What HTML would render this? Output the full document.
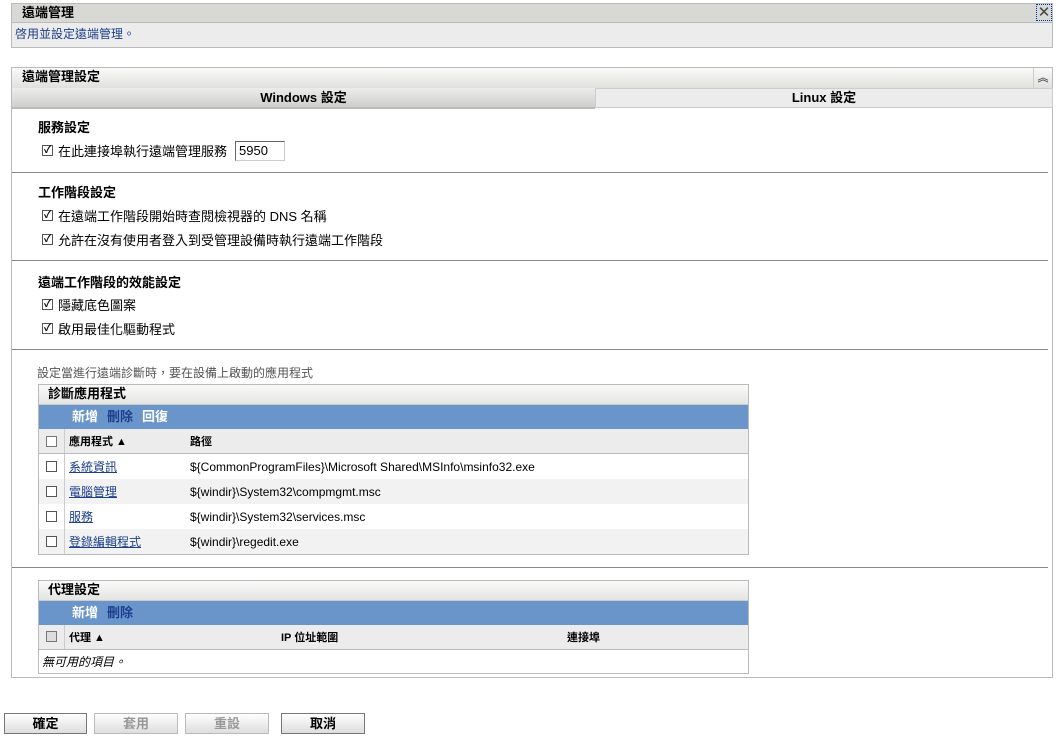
<!DOCTYPE html><html><head><meta charset="utf-8"><style>
*{margin:0;padding:0;box-sizing:border-box}
body{width:1061px;height:737px;background:#fff;font-family:"Liberation Sans","Noto Sans CJK TC",sans-serif;font-size:12px;line-height:14px;color:#000;position:relative;overflow:hidden}
.a{position:absolute}
.b{font-weight:bold}
.cb{position:absolute;width:11px;height:11px;border:1px solid #555;background:#fff;font-size:10px;line-height:9px;text-align:center;font-weight:bold}
.line{position:absolute;left:12px;width:1036px;height:1px;background:#888}
.tbl{position:absolute;left:38px;width:711px;border:1px solid #bbb}
.th{height:20px;background:linear-gradient(#fafafa,#e4e4e2);border-bottom:1px solid #ccc;font-weight:bold;font-size:13px;line-height:18px;padding:0 0 0 9px}
.bar{height:24px;background:#6a95cb;font-weight:bold;font-size:13px;line-height:24px;padding:0 0 0 33px;color:#fff}
.bar span{margin-right:9px}
.ch{height:25px;background:#ececec;border-bottom:1px solid #bbb;position:relative;font-weight:bold;font-size:11px}
.row{height:25px;position:relative}
.row a{color:#1b3f8b;text-decoration:underline}
.btn{position:absolute;top:713px;height:21px;border:1px solid #777;background:linear-gradient(#fff,#ddd);text-align:center;font-weight:bold;font-size:13px;line-height:19px}
</style></head><body>
<div class="a" style="left:11px;top:3px;width:1042px;height:45px;border:1px solid #bbb;background:#ececec">
<div style="height:19px;background:#d8d9d4;border-bottom:1px solid #bbb;font-weight:bold;font-size:13px;line-height:17px;padding:0 0 0 10px">遠端管理</div>
<div style="color:#1b3f8b;padding:4px 0 0 3px;font-size:12px">啓用並設定遠端管理。</div>
</div>
<div class="a" style="left:1036px;top:4px;width:16px;height:17px;border:1px dotted #0033aa;color:#444;font-size:15px;line-height:15px;text-align:center">✕</div>

<div class="a" style="left:11px;top:67px;width:1042px;height:611px;border:1px solid #bbb">
<div style="height:20px;background:linear-gradient(#fafafa,#e0e0de);font-weight:bold;font-size:13px;line-height:18px;padding:0 0 0 10px;position:relative">遠端管理設定<div class="a" style="right:0;top:0;width:19px;height:20px;border-left:1px solid #ccc;font-size:11px;color:#555;text-align:center;line-height:20px">︽</div></div>
<div style="position:relative;height:21px">
<div class="a" style="left:0;top:0;width:583px;height:21px;background:linear-gradient(#ececec,#cfcfcd);border-bottom:2px solid #bbb;text-align:center;font-weight:bold;font-size:13px;line-height:19px">Windows 設定</div>
<div class="a" style="left:583px;top:0;width:458px;height:20px;background:#ececec;border:1px solid #ccc;text-align:center;font-weight:bold;font-size:13px;line-height:18px">Linux 設定</div>
</div>
</div>

<div class="a b" style="left:38px;top:121px;font-size:13px">服務設定</div>
<div class="cb" style="left:42px;top:145px">✓</div>
<div class="a" style="left:58px;top:145px;font-size:13px">在此連接埠執行遠端管理服務</div>
<div class="a" style="left:235px;top:141px;width:50px;height:20px;border:1px solid #666;border-right-color:#ccc;border-bottom-color:#ccc;padding:2px 3px;font-size:13px">5950</div>
<div class="line" style="top:172px"></div>

<div class="a b" style="left:38px;top:186px;font-size:13px">工作階段設定</div>
<div class="cb" style="left:42px;top:210px">✓</div>
<div class="a" style="left:58px;top:210px;font-size:13px">在遠端工作階段開始時查閱檢視器的 DNS 名稱</div>
<div class="cb" style="left:42px;top:234px">✓</div>
<div class="a" style="left:58px;top:234px;font-size:13px">允許在沒有使用者登入到受管理設備時執行遠端工作階段</div>
<div class="line" style="top:260px"></div>

<div class="a b" style="left:38px;top:276px;font-size:13px">遠端工作階段的效能設定</div>
<div class="cb" style="left:42px;top:299px">✓</div>
<div class="a" style="left:58px;top:299px;font-size:13px">隱藏底色圖案</div>
<div class="cb" style="left:42px;top:323px">✓</div>
<div class="a" style="left:58px;top:323px;font-size:13px">啟用最佳化驅動程式</div>
<div class="line" style="top:349px"></div>

<div class="a" style="left:37px;top:366px;color:#555">設定當進行遠端診斷時，要在設備上啟動的應用程式</div>
<div class="tbl" style="top:384px;height:171px">
<div class="th">診斷應用程式</div>
<div class="bar"><span>新增</span><span style="color:#1b3f8b">刪除</span><span>回復</span></div>
<div class="ch"><div class="cb" style="left:7px;top:7px;border-color:#777"></div><div class="a" style="left:25px;top:0;height:24px;border-left:1px solid #ccc"></div><div class="a" style="left:30px;top:6px">應用程式 ▲</div><div class="a" style="left:151px;top:6px">路徑</div></div>
<div class="row"><div class="cb" style="left:7px;top:7px"></div><a class="a" style="left:30px;top:6px">系統資訊</a><div class="a" style="left:151px;top:6px">${CommonProgramFiles}\Microsoft Shared\MSInfo\msinfo32.exe</div></div>
<div class="row" style="background:#f2f2f2"><div class="cb" style="left:7px;top:7px"></div><a class="a" style="left:30px;top:6px">電腦管理</a><div class="a" style="left:151px;top:6px">${windir}\System32\compmgmt.msc</div></div>
<div class="row"><div class="cb" style="left:7px;top:7px"></div><a class="a" style="left:30px;top:6px">服務</a><div class="a" style="left:151px;top:6px">${windir}\System32\services.msc</div></div>
<div class="row" style="background:#f2f2f2"><div class="cb" style="left:7px;top:7px"></div><a class="a" style="left:30px;top:6px">登錄編輯程式</a><div class="a" style="left:151px;top:6px">${windir}\regedit.exe</div></div>
<div class="a" style="left:25px;top:69px;width:1px;height:100px;background:#ccc"></div>
</div>
<div class="line" style="top:567px"></div>

<div class="tbl" style="top:580px;height:94px">
<div class="th">代理設定</div>
<div class="bar"><span>新增</span><span style="color:#1b3f8b">刪除</span></div>
<div class="ch"><div class="cb" style="left:7px;top:6px;background:#ddd;border-color:#777"></div><div class="a" style="left:25px;top:0;height:24px;border-left:1px solid #ccc"></div><div class="a" style="left:30px;top:6px">代理 ▲</div><div class="a" style="left:242px;top:6px">IP 位址範圍</div><div class="a" style="left:528px;top:6px">連接埠</div></div>
<div style="padding:5px 0 0 3px;font-style:italic">無可用的項目。</div>
</div>

<div class="btn" style="left:4px;width:83px">確定</div>
<div class="btn" style="left:94px;width:84px;color:#999;border-color:#bbb">套用</div>
<div class="btn" style="left:185px;width:84px;color:#999;border-color:#bbb">重設</div>
<div class="btn" style="left:281px;width:84px">取消</div>
</body></html>
